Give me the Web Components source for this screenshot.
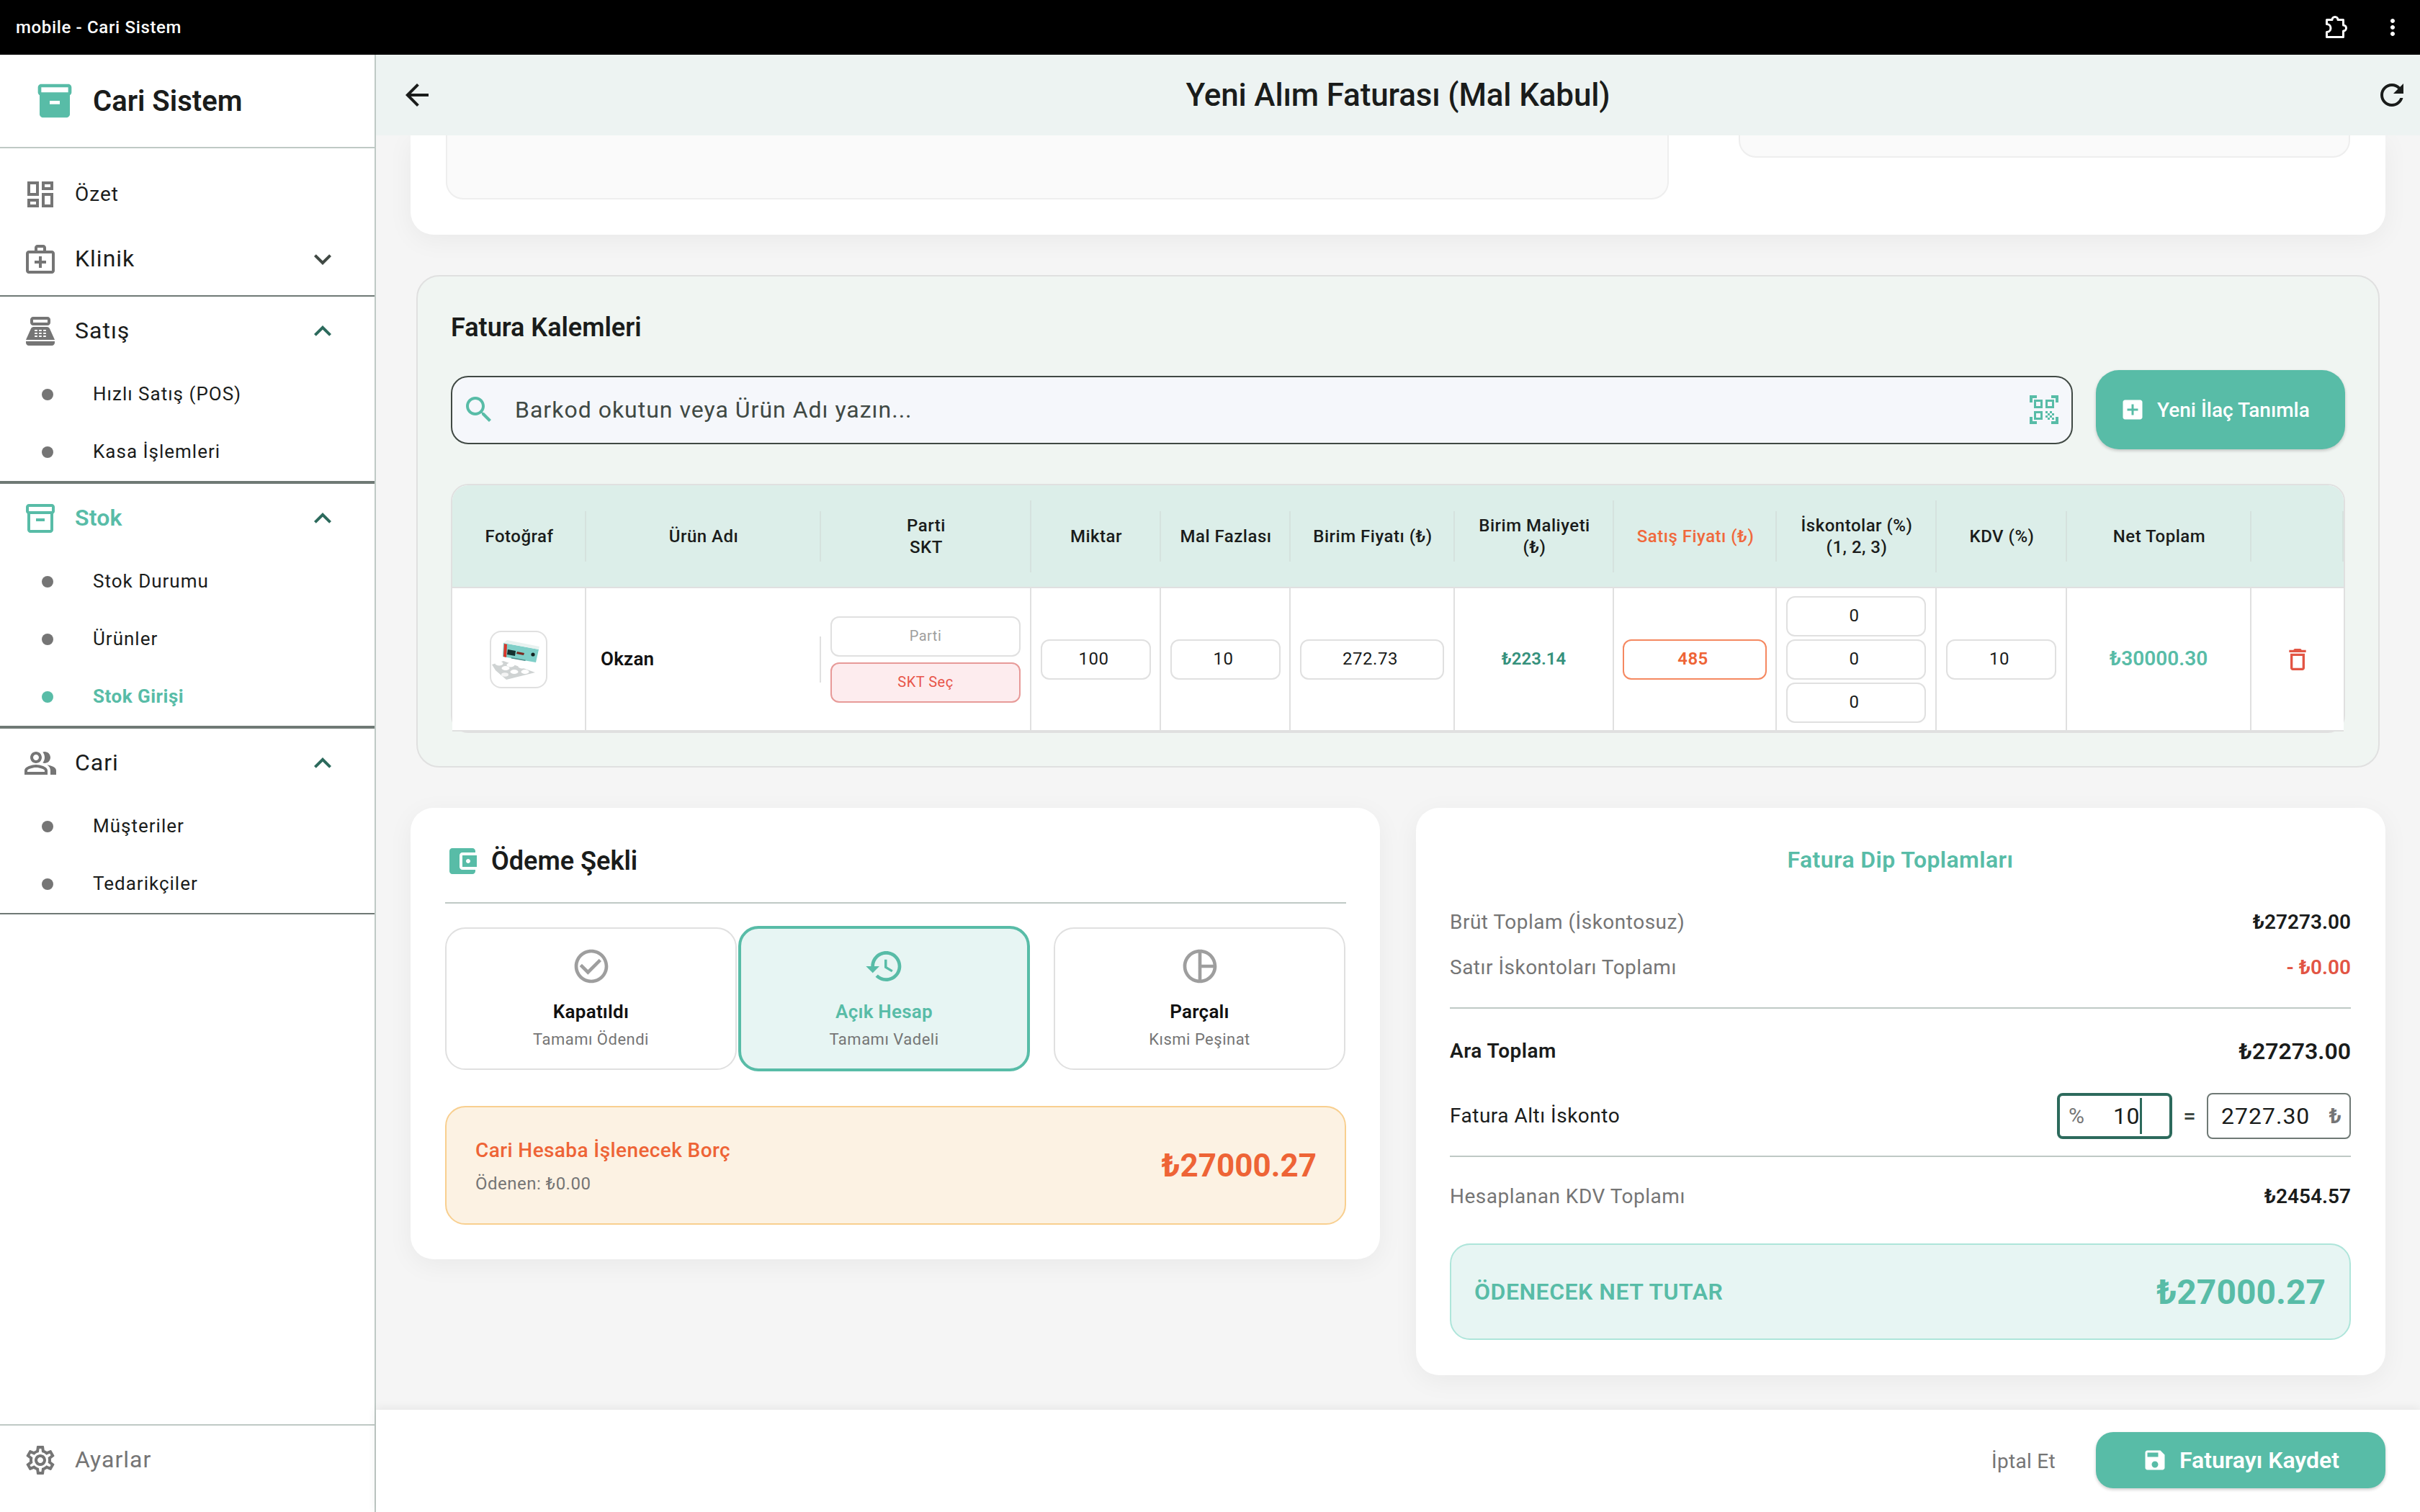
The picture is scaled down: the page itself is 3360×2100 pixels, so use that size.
<!DOCTYPE html>
<html lang="tr">
<head>
<meta charset="utf-8">
<title>mobile - Cari Sistem</title>
<style>
html,body{margin:0;padding:0;width:3360px;height:2100px;overflow:hidden;background:#f5f5f5;font-family:Roboto,"Liberation Sans",sans-serif;}
</style>
</head>
<body>
<app-shell></app-shell>
<script>
const ICONS={
inventory:"M20 2H4c-1 0-2 .9-2 2v3.01c0 .72.43 1.34 1 1.69V20c0 1.1 1.1 2 2 2h14c.9 0 2-.9 2-2V8.7c.57-.35 1-.97 1-1.69V4c0-1.1-1-2-2-2zm-5 12H9v-2h6v2zm5-7H4V4l16-.02V7z",
inventoryO:"M20 2H4c-1 0-2 .9-2 2v3.01c0 .72.43 1.34 1 1.69V20c0 1.1 1.1 2 2 2h14c.9 0 2-.9 2-2V8.7c.57-.35 1-.97 1-1.69V4c0-1.1-1-2-2-2zm-1 18H5V9h14v11zm1-13H4V4h16v3z M9 12h6v2H9z",
dashboard:"M19 5v2h-4V5h4M9 5v6H5V5h4m10 8v6h-4v-6h4M9 17v2H5v-2h4M21 3h-8v6h8V3zM11 3H3v10h8V3zm10 8h-8v10h8V11zm-10 4H3v6h8v-6z",
medical:"M20 6h-4V4c0-1.1-.9-2-2-2h-4c-1.1 0-2 .9-2 2v2H4c-1.1 0-2 .9-2 2v12c0 1.1.9 2 2 2h16c1.1 0 2-.9 2-2V8c0-1.1-.9-2-2-2zM10 4h4v2h-4V4zm10 16H4V8h16v12z M13 10h-2v3H8v2h3v3h2v-3h3v-2h-3z",
pos:"M17 2H7c-1.1 0-2 .9-2 2v2c0 1.1.9 2 2 2h10c1.1 0 2-.9 2-2V4c0-1.1-.9-2-2-2zm0 4H7V4h10v2zm3 16H4c-1.1 0-2-.9-2-2v-1h20v1c0 1.1-.9 2-2 2zm-1.47-11.81C18.21 9.47 17.49 9 16.7 9H7.3c-.79 0-1.51.47-1.83 1.19L2 18h20l-3.47-7.81zM9.5 16h-1c-.28 0-.5-.22-.5-.5s.22-.5.5-.5h1c.28 0 .5.22.5.5s-.22.5-.5.5zm0-2h-1c-.28 0-.5-.22-.5-.5s.22-.5.5-.5h1c.28 0 .5.22.5.5s-.22.5-.5.5zm0-2h-1c-.28 0-.5-.22-.5-.5s.22-.5.5-.5h1c.28 0 .5.22.5.5s-.22.5-.5.5zm3 4h-1c-.28 0-.5-.22-.5-.5s.22-.5.5-.5h1c.28 0 .5.22.5.5s-.22.5-.5.5zm0-2h-1c-.28 0-.5-.22-.5-.5s.22-.5.5-.5h1c.28 0 .5.22.5.5s-.22.5-.5.5zm0-2h-1c-.28 0-.5-.22-.5-.5s.22-.5.5-.5h1c.28 0 .5.22.5.5s-.22.5-.5.5zm3 4h-1c-.28 0-.5-.22-.5-.5s.22-.5.5-.5h1c.28 0 .5.22.5.5s-.22.5-.5.5zm0-2h-1c-.28 0-.5-.22-.5-.5s.22-.5.5-.5h1c.28 0 .5.22.5.5s-.22.5-.5.5zm0-2h-1c-.28 0-.5-.22-.5-.5s.22-.5.5-.5h1c.28 0 .5.22.5.5s-.22.5-.5.5z",
people:"M16.67 13.13C18.04 14.06 19 15.32 19 17v3h4v-3c0-2.18-3.57-3.47-6.33-3.87z M15 12c2.21 0 4-1.79 4-4s-1.79-4-4-4c-.47 0-.91.1-1.33.24C14.5 5.27 15 6.58 15 8s-.5 2.73-1.33 3.76c.42.14.86.24 1.33.24z M9 12c2.21 0 4-1.79 4-4s-1.79-4-4-4-4 1.79-4 4 1.79 4 4 4zm0-6c1.1 0 2 .9 2 2s-.9 2-2 2-2-.9-2-2 .9-2 2-2z M9 13c-2.67 0-8 1.34-8 4v3h16v-3c0-2.66-5.33-4-8-4zm6 5H3v-.99C3.2 16.29 6.3 15 9 15s5.8 1.29 6 2v1z",
settings:"M19.43 12.98c.04-.32.07-.64.07-.98 0-.34-.03-.66-.07-.98l2.11-1.65c.19-.15.24-.42.12-.64l-2-3.46c-.09-.16-.26-.25-.44-.25-.06 0-.12.01-.17.03l-2.49 1c-.52-.4-1.08-.73-1.69-.98l-.38-2.65C14.46 2.18 14.25 2 14 2h-4c-.25 0-.46.18-.49.42l-.38 2.65c-.61.25-1.17.59-1.69.98l-2.49-1c-.06-.02-.12-.03-.18-.03-.17 0-.34.09-.43.25l-2 3.46c-.13.22-.07.49.12.64l2.11 1.65c-.04.32-.07.65-.07.98 0 .33.03.66.07.98l-2.11 1.65c-.19.15-.24.42-.12.64l2 3.46c.09.16.26.25.44.25.06 0 .12-.01.17-.03l2.49-1c.52.4 1.08.73 1.69.98l.38 2.65c.03.24.24.42.49.42h4c.25 0 .46-.18.49-.42l.38-2.65c.61-.25 1.17-.59 1.69-.98l2.49 1c.06.02.12.03.18.03.17 0 .34-.09.43-.25l2-3.46c.12-.22.07-.49-.12-.64l-2.11-1.65zm-1.98-1.71c.04.31.05.52.05.73 0 .21-.02.43-.05.73l-.14 1.13.89.7 1.08.84-.7 1.21-1.27-.51-1.04-.42-.9.68c-.43.32-.84.56-1.25.73l-1.06.43-.16 1.13-.2 1.35h-1.4l-.19-1.35-.16-1.13-1.06-.43c-.43-.18-.83-.41-1.23-.71l-.91-.7-1.06.43-1.27.51-.7-1.21 1.08-.84.89-.7-.14-1.13c-.03-.31-.05-.54-.05-.74s.02-.43.05-.73l.14-1.13-.89-.7-1.08-.84.7-1.21 1.27.51 1.04.42.9-.68c.43-.32.84-.56 1.25-.73l1.06-.43.16-1.13.2-1.35h1.39l.19 1.35.16 1.13 1.06.43c.43.18.83.41 1.23.71l.91.7 1.06-.43 1.27-.51.7 1.21-1.07.85-.89.7.14 1.13zM12 8c-2.21 0-4 1.79-4 4s1.79 4 4 4 4-1.79 4-4-1.79-4-4-4zm0 6c-1.1 0-2-.9-2-2s.9-2 2-2 2 .9 2 2-.9 2-2 2z",
more:"M16.59 8.59L12 13.17 7.41 8.59 6 10l6 6 6-6z",
less:"M12 8l-6 6 1.41 1.41L12 10.83l4.59 4.58L18 14z",
back:"M20 11H7.83l5.59-5.59L12 4l-8 8 8 8 1.41-1.41L7.83 13H20v-2z",
refresh:"M17.65 6.35C16.2 4.9 14.21 4 12 4c-4.42 0-7.99 3.58-7.99 8s3.57 8 7.99 8c3.73 0 6.84-2.55 7.73-6h-2.08c-.82 2.33-3.04 4-5.65 4-3.31 0-6-2.69-6-6s2.69-6 6-6c1.66 0 3.14.69 4.22 1.78L13 11h7V4l-2.35 2.35z",
search:"M15.5 14h-.79l-.28-.27C15.41 12.59 16 11.11 16 9.5 16 5.91 13.09 3 9.5 3S3 5.91 3 9.5 5.91 16 9.5 16c1.61 0 3.09-.59 4.23-1.57l.27.28v.79l5 4.99L20.49 19l-4.99-5zm-6 0C7.01 14 5 11.99 5 9.5S7.01 5 9.5 5 14 7.01 14 9.5 11.99 14 9.5 14z",
qr:"M9.5 6.5v3h-3v-3h3M11 5H5v6h6V5zm-1.5 9.5v3h-3v-3h3M11 13H5v6h6v-6zm6.5-6.5v3h-3v-3h3M19 5h-6v6h6V5zm-6 8h1.5v1.5H13V13zm1.5 1.5H16V16h-1.5v-1.5zM16 13h1.5v1.5H16V13zm-3 3h1.5v1.5H13V16zm1.5 1.5H16V19h-1.5v-1.5zM16 16h1.5v1.5H16V16zm1.5-1.5H19V16h-1.5v-1.5zm0 3H19V19h-1.5v-1.5zM22 7h-2V4h-3V2h5v5zm0 15v-5h-2v3h-3v2h5zM2 22h5v-2H4v-3H2v5zM2 2v5h2V4h3V2H2z",
addbox:"M19 3H5c-1.11 0-2 .9-2 2v14c0 1.1.89 2 2 2h14c1.1 0 2-.9 2-2V5c0-1.1-.9-2-2-2zm-2 10h-4v4h-2v-4H7v-2h4V7h2v4h4v2z",
trash:"M6 19c0 1.1.9 2 2 2h8c1.1 0 2-.9 2-2V7H6v12zM8 9h8v10H8V9zm7.5-5l-1-1h-5l-1 1H5v2h14V4z",
wallet:"M21 18v1c0 1.1-.9 2-2 2H5c-1.11 0-2-.9-2-2V5c0-1.1.89-2 2-2h14c1.1 0 2 .9 2 2v1h-9c-1.11 0-2 .9-2 2v8c0 1.1.89 2 2 2h9zm-9-2h10V8H12v8zm4-2.5c-.83 0-1.5-.67-1.5-1.5s.67-1.5 1.5-1.5 1.5.67 1.5 1.5-.67 1.5-1.5 1.5z",
check:"M16.59 7.58L10 14.17l-3.59-3.58L5 12l5 5 8-8zM12 2C6.48 2 2 6.48 2 12s4.48 10 10 10 10-4.48 10-10S17.52 2 12 2zm0 18c-4.42 0-8-3.58-8-8s3.58-8 8-8 8 3.58 8 8-3.58 8-8 8z",
history:"M13 3c-4.97 0-9 4.03-9 9H1l3.89 3.89.07.14L9 12H6c0-3.87 3.13-7 7-7s7 3.13 7 7-3.13 7-7 7c-1.93 0-3.68-.79-4.94-2.06l-1.42 1.42C8.27 19.99 10.51 21 13 21c4.97 0 9-4.03 9-9s-4.03-9-9-9zm-1 5v5l4.28 2.54.72-1.21-3.5-2.08V8H12z",
pie:"M12 2C6.49 2 2 6.49 2 12s4.49 10 10 10 10-4.49 10-10S17.51 2 12 2zm1 2.07c3.61.45 6.48 3.33 6.93 6.93H13V4.07zM4 12c0-4.06 3.07-7.44 7-7.93v15.87c-3.93-.5-7-3.88-7-7.94zm9 7.93V13h6.93c-.45 3.61-3.32 6.48-6.93 6.93z",
save:"M17 3H5c-1.11 0-2 .9-2 2v14c0 1.1.89 2 2 2h14c1.1 0 2-.9 2-2V7l-4-4zm-5 16c-1.66 0-3-1.34-3-3s1.34-3 3-3 3 1.34 3 3-1.34 3-3 3zm3-10H5V5h10v4z",
kebab:"M12 8c1.1 0 2-.9 2-2s-.9-2-2-2-2 .9-2 2 .9 2 2 2zm0 2c-1.1 0-2 .9-2 2s.9 2 2 2 2-.9 2-2-.9-2-2-2zm0 6c-1.1 0-2 .9-2 2s.9 2 2 2 2-.9 2-2-.9-2-2-2z"
};
const TEAL="#58bca7",ORANGE="#ee6436",RED="#e25544",INK="#1a1c1b",GREY="#757575";

function comp(name,html,init){
  customElements.define(name,class extends HTMLElement{
    constructor(){super();this.attachShadow({mode:"open"});}
    connectedCallback(){
      if(this._r)return;this._r=1;
      this.shadowRoot.innerHTML=typeof html==="function"?html(this):html;
      if(init)init(this);
    }
  });
}
comp("ui-icon",h=>{
  const s=h.getAttribute("size")||48,c=h.getAttribute("color")||"currentColor",d=ICONS[h.getAttribute("name")];
  return `<style>:host{display:inline-flex;flex:none;width:${s}px;height:${s}px;color:${c}}svg{display:block;width:100%;height:100%;fill:currentColor}</style><svg viewBox="0 0 24 24"><path fill-rule="evenodd" d="${d}"/></svg>`;
});

comp("title-bar",`<style>
:host{display:flex;align-items:center;height:76px;background:#000;color:#fff;padding:0 20px 0 22px;font-size:24px;font-weight:500;letter-spacing:.65px;flex:none}
span{flex:1}.i{display:flex;align-items:center;gap:41px}
.x{display:block;width:40px;height:40px;fill:none;stroke:#fff;stroke-width:3;stroke-linejoin:round}
</style><span>mobile - Cari Sistem</span><div class="i"><svg class="x" viewBox="0 0 40 40"><path d="M7.5 9.5H15a4 4 0 0 1 8 0H30.5V17a4 4 0 0 1 0 8V33.5H7.5V26.5a5.5 5.5 0 0 0 0-11z"/></svg><ui-icon name="kebab" size="36" color="#fff"></ui-icon></div>`);

comp("nav-tile",h=>`<style>
:host{display:flex;align-items:center;height:${h.getAttribute("h")||80}px;padding-left:32px;color:${h.hasAttribute("muted")?GREY:INK};font-size:${h.getAttribute("fs")||28}px;letter-spacing:1px}
ui-icon{margin-right:24px}
span{padding-bottom:2px}
</style><ui-icon name="${h.getAttribute("icon")}" size="48" color="#757575"></ui-icon><span><slot></slot></span>`);

comp("nav-sub",h=>{const a=h.hasAttribute("active");return `<style>
:host{display:flex;align-items:center;height:80px;padding-left:58px;font-size:26px;letter-spacing:${a?.5:1}px;color:${a?TEAL:INK};font-weight:${a?700:400}}
i{width:16px;height:16px;border-radius:50%;background:${a?TEAL:"#757575"};margin-right:55px;flex:none}
span{padding-bottom:2px}
</style><i></i><span><slot></slot></span>`});

comp("nav-group",h=>{
  const open=h.hasAttribute("open"),act=h.hasAttribute("active");
  return `<style>
:host{display:block;border-top:2px solid ${open?"#6f7975":"transparent"};border-bottom:2px solid ${open?"#6f7975":"transparent"}}
.h{display:flex;align-items:center;height:96px;padding:0 48px 0 32px;font-size:32px;letter-spacing:${act?.2:1}px;color:${act?TEAL:INK};font-weight:${act?600:400}}
.h ui-icon:first-child{margin-right:24px}
span{flex:1;padding-bottom:2px}
</style><div class="h"><ui-icon name="${h.getAttribute("icon")}" size="48" color="${act?TEAL:"#757575"}"></ui-icon><span>${h.getAttribute("label")}</span><ui-icon name="${open?"less":"more"}" size="48" color="${open?"#2c6a5c":"#404944"}"></ui-icon></div><slot></slot>`;
});

comp("side-nav",`<style>
:host{display:flex;flex-direction:column;width:520px;flex:none;background:#fff;border-right:2px solid #bfc9c5;height:2024px}
.logo{display:flex;align-items:center;height:128px;border-bottom:2px solid #bfc9c5;padding-left:48px;font-size:40px;font-weight:600;color:${INK};flex:none}
.logo ui-icon{margin-right:25px}
nav{flex:1;padding-top:24px}
.foot{border-top:2px solid #bfc9c5;padding-bottom:24px;flex:none}
</style>
<div class="logo"><ui-icon name="inventory" size="56" color="${TEAL}"></ui-icon>Cari Sistem</div>
<nav>
<nav-tile icon="dashboard">Özet</nav-tile>
<nav-group icon="medical" label="Klinik"></nav-group>
<nav-group icon="pos" label="Satış" open><nav-sub>Hızlı Satış (POS)</nav-sub><nav-sub>Kasa İşlemleri</nav-sub></nav-group>
<nav-group icon="inventoryO" label="Stok" open active><nav-sub>Stok Durumu</nav-sub><nav-sub>Ürünler</nav-sub><nav-sub active>Stok Girişi</nav-sub></nav-group>
<nav-group icon="people" label="Cari" open><nav-sub>Müşteriler</nav-sub><nav-sub>Tedarikçiler</nav-sub></nav-group>
</nav>
<div class="foot"><nav-tile icon="settings" h="96" fs="32" muted>Ayarlar</nav-tile></div>`);

comp("app-header",`<style>
:host{display:grid;grid-template-columns:1fr auto 1fr;align-items:center;height:112px;background:#edf3f2;flex:none;color:${INK}}
h1{margin:0;font-size:44px;font-weight:500;line-height:56px;letter-spacing:-.15px}
.b{margin-left:33px}
.r{justify-self:end;margin-right:15px}
</style><ui-icon class="b" name="back" size="48"></ui-icon><h1>Yeni Alım Faturası (Mal Kabul)</h1><ui-icon class="r" name="refresh" size="48"></ui-icon>`);

comp("clipped-card",`<style>
:host{display:flex;height:138px;background:#fff;margin:0 48px;border-radius:0 0 32px 32px;box-shadow:0 8px 36px rgba(0,0,0,.05);padding:0 49px 0 49px;box-sizing:border-box;flex:none}
.a,.b{background:#fafafa;border:2px solid #eee;border-top:0;border-radius:0 0 24px 24px;box-sizing:border-box}
.a{width:1698px;height:89px}
.b{width:849px;height:31px;margin-left:97px}
</style><div class="a"></div><div class="b"></div>`);

comp("num-field",h=>{
  const w=h.getAttribute("w"),c=h.getAttribute("color")||INK,b=h.getAttribute("border")||"#e0e0e0",bg=h.getAttribute("bg")||"#fff",fs=h.getAttribute("fs")||24,fw=h.getAttribute("fw")||400,pr=h.getAttribute("pr")||5;
  return `<style>:host{display:flex;align-items:center;justify-content:center;width:${w}px;height:56px;box-sizing:border-box;border:2px solid ${b};border-radius:12px;background:${bg};color:${c};font-size:${fs}px;font-weight:${fw};letter-spacing:.5px;padding:0 ${pr}px 2px 0;flex:none}</style><slot></slot>`;
});

comp("items-table",`<style>
:host{display:block;border:2px solid #e0e0e0;border-radius:24px;background:#fff}
.g{display:grid;grid-template-columns:186px 326px 292px 180px 180px 228px 221px 226px 222px 181px 256px 128px}
.th{height:141px;background-color:#dceee9;border-bottom:2px solid #e0e0e0;display:flex;align-items:center;justify-content:center;text-align:center;font-size:24px;font-weight:500;line-height:30px;letter-spacing:.5px;color:${INK};background-image:linear-gradient(#d5e2de,#d5e2de);background-repeat:no-repeat;background-position:right center;background-size:2px 70px;box-sizing:content-box}
.th.t{background-size:2px 100px}
.th.f{border-top-left-radius:22px}.th.l{border-top-right-radius:22px;}
.th.o{color:#f0693c}
.td{height:197px;display:flex;flex-direction:column;align-items:center;justify-content:center;gap:4px;border-right:2px solid #e0e0e0;border-bottom:2px solid #e0e0e0;box-sizing:content-box;background:#fff}
.td.n{border-right:0;background-image:linear-gradient(#e0e0e0,#e0e0e0);background-repeat:no-repeat;background-position:right center;background-size:2px 64px;align-items:flex-start;padding:0 0 2px 20px;height:195px;font-size:26px;font-weight:600;letter-spacing:.2px;color:#111}
.td.e{border-right:0}
.td.p{gap:8px}
.pic{width:80px;height:80px;border:2px solid #e0e0e0;border-radius:16px;box-sizing:border-box;overflow:hidden;background:#fff}
.pic svg{display:block;width:76px;height:76px}
.txt{font-size:24px;font-weight:600;letter-spacing:0;padding-bottom:2px}
</style>
<div class="g">
<div class="th f">Fotoğraf</div><div class="th">Ürün Adı</div><div class="th t">Parti<br>SKT</div><div class="th">Miktar</div><div class="th">Mal Fazlası</div><div class="th">Birim Fiyatı (₺)</div><div class="th t">Birim Maliyeti<br>(₺)</div><div class="th o">Satış Fiyatı (₺)</div><div class="th t">İskontolar (%)<br>(1, 2, 3)</div><div class="th">KDV (%)</div><div class="th">Net Toplam</div><div class="th l"></div>
<div class="td"><div class="pic"><svg viewBox="0 0 76 76">
<polygon points="17,15 66,24 62,42 16,34" fill="#7fcfc8"/><polygon points="17,15 66,24 67,20 22,11" fill="#e8f2f0"/><polygon points="18,16 22,17 21,35 17,34" fill="#d8382c"/><polygon points="23,24 34,26 33,33 22,31" fill="#14312f"/><polygon points="36,27 46,29 45,32 35,30" fill="#7a2a20"/><circle cx="58" cy="31" r="2.6" fill="#14201f"/><rect x="28" y="35" width="20" height="1.6" fill="#4d8f8c" transform="rotate(10 28 35)"/>
<polygon points="1,45 17,40 61,56 21,66 6,53" fill="#cfd3d3"/>
<ellipse cx="11" cy="43.5" rx="5.5" ry="3" fill="#fff"/><ellipse cx="27" cy="45.5" rx="5.5" ry="3" fill="#fff"/><ellipse cx="43" cy="47.5" rx="5.5" ry="3" fill="#fff"/><ellipse cx="20" cy="50" rx="5.5" ry="3" fill="#fff"/><ellipse cx="32" cy="55" rx="5.5" ry="3" fill="#fff"/><ellipse cx="47" cy="55" rx="5.5" ry="3" fill="#fff"/><ellipse cx="19" cy="59" rx="5" ry="2.8" fill="#f4f4f4"/>
</svg></div></div>
<div class="td n">Okzan</div>
<div class="td p"><num-field w="264" color="#9e9e9e" fs="20" pr="0">Parti</num-field><num-field w="264" color="#e8554a" border="#e79a98" bg="#fdecee" fs="20" pr="0">SKT Seç</num-field></div>
<div class="td"><num-field w="153">100</num-field></div>
<div class="td"><num-field w="153">10</num-field></div>
<div class="td"><num-field w="200">272.73</num-field></div>
<div class="td"><span class="txt" style="color:#35917c">₺223.14</span></div>
<div class="td"><num-field w="200" color="${ORANGE}" border="#f58860" fw="600">485</num-field></div>
<div class="td"><num-field w="194">0</num-field><num-field w="194">0</num-field><num-field w="194">0</num-field></div>
<div class="td"><num-field w="153">10</num-field></div>
<div class="td"><span class="txt" style="font-size:28px;color:${TEAL}">₺30000.30</span></div>
<div class="td e"><ui-icon name="trash" size="40" color="${RED}"></ui-icon></div>
</div>`);

comp("items-panel",`<style>
:host{display:block;margin:56px 56px 0;background:#f0f5f2;border:2px solid #e0e0e0;border-radius:32px;padding:49px 46px 46px 46px;flex:none}
h2{margin:0;font-size:36px;font-weight:600;line-height:44px;color:${INK}}
.row{display:flex;align-items:center;gap:32px;margin:37px 0 48px}
.s{flex:1;display:flex;align-items:center;height:95px;box-sizing:border-box;background:#f5f7fb;border:2px solid #404944;border-radius:24px;padding:0 14px 0 13px;font-size:32px;letter-spacing:1px;color:#404944}
.s span{flex:1;margin-left:26px}
.btn{display:flex;align-items:center;height:110px;width:346px;flex:none;box-sizing:border-box;background:${TEAL};border-radius:32px;color:#fff;font-size:28px;font-weight:500;padding-left:33px;box-shadow:0 2px 4px rgba(0,0,0,.2)}
.btn ui-icon{margin-right:16px}
</style><h2>Fatura Kalemleri</h2>
<div class="row"><div class="s"><ui-icon name="search" color="${TEAL}"></ui-icon><span>Barkod okutun veya Ürün Adı yazın...</span><ui-icon name="qr" color="${TEAL}"></ui-icon></div>
<div class="btn"><ui-icon name="addbox" size="36" color="#fff"></ui-icon>Yeni İlaç Tanımla</div></div>
<items-table></items-table>`);

comp("pay-option",h=>{
  const sel=h.hasAttribute("selected");
  return `<style>
:host{display:flex;flex-direction:column;align-items:center;justify-content:center;box-sizing:border-box;flex:none;width:${h.getAttribute("w")}px;height:${sel?202:198}px;margin-left:${h.getAttribute("ml")||0}px;background:${sel?"#e7f5f3":"#fff"};border:${sel?4:2}px solid ${sel?TEAL:"#e0e0e0"};border-radius:28px;padding-bottom:2px}
b{font-size:26px;font-weight:600;line-height:30px;margin-top:20px;letter-spacing:.25px;color:${sel?TEAL:"#111"}}
small{font-size:22px;line-height:28px;margin-top:10px;color:${GREY};letter-spacing:.5px}
</style><ui-icon name="${h.getAttribute("icon")}" size="56" color="${sel?TEAL:"#9e9e9e"}"></ui-icon><b>${h.getAttribute("label")}</b><small>${h.getAttribute("sub")}</small>`;
});

comp("payment-card",`<style>
:host{display:block;width:1346px;box-sizing:border-box;flex:none;background:#fff;border-radius:32px;padding:50px 47px 48px 48px;box-shadow:0 8px 36px rgba(0,0,0,.05)}
.t{display:flex;align-items:center;gap:16px;font-size:36px;font-weight:600;height:48px;color:${INK};padding-bottom:33px;border-bottom:2px solid #bfc9c5;margin-bottom:31px}
.o{display:flex;align-items:center}
.d{display:flex;align-items:center;justify-content:space-between;box-sizing:border-box;height:165px;margin-top:48px;background:#fcf2e3;border:2px solid #f8cf8f;border-radius:28px;padding:0 39px 0 40px}
.d b{display:block;color:${ORANGE};font-size:28px;font-weight:500;line-height:34px;letter-spacing:.4px;padding-top:2px}
.d small{display:block;color:${GREY};font-size:24px;line-height:30px;margin-top:14px;letter-spacing:.5px}
.d strong{color:${ORANGE};font-size:44px;font-weight:700}
</style><div class="t"><ui-icon name="wallet" color="${TEAL}"></ui-icon>Ödeme Şekli</div>
<div class="o"><pay-option w="405" icon="check" label="Kapatıldı" sub="Tamamı Ödendi"></pay-option><pay-option w="405" ml="2" selected icon="history" label="Açık Hesap" sub="Tamamı Vadeli"></pay-option><pay-option w="405" ml="33" icon="pie" label="Parçalı" sub="Kısmi Peşinat"></pay-option></div>
<div class="d"><div><b>Cari Hesaba İşlenecek Borç</b><small>Ödenen: ₺0.00</small></div><strong>₺27000.27</strong></div>`);

comp("sum-row",h=>{
  const m=h.getAttribute("mt")||0;
  return `<style>:host{display:flex;justify-content:space-between;align-items:center;margin-top:${m}px;line-height:${h.getAttribute("lh")||36}px;font-size:28px;color:${h.getAttribute("lc")||GREY};font-weight:${h.getAttribute("lw")||400};letter-spacing:.5px}
::slotted(*){letter-spacing:0}</style><span><slot></slot></span><slot name="v"></slot>`;
});

comp("summary-card",`<style>
:host{display:block;width:1346px;box-sizing:border-box;flex:none;background:#fff;border-radius:32px;padding:52px 48px 49px 47px;box-shadow:0 8px 36px rgba(0,0,0,.05)}
h3{margin:0;text-align:center;color:${TEAL};font-size:32px;font-weight:600;line-height:40px;letter-spacing:.4px}
.v{font-size:28px;font-weight:600;color:${INK}}
hr{border:0;height:2px;background:#bfc9c5;margin:0}
.f{display:flex;align-items:center;height:64px}
.pi,.ai{display:flex;align-items:center;box-sizing:border-box;height:64px;border-radius:8px;font-size:32px;color:${INK}}
.pi{width:160px;border:4px solid #2c6a5c;padding:0 0 0 12px}
.pi em{font-style:normal;font-size:30px;color:${GREY};margin-right:40px}
.pi u{text-decoration:none;border-right:3px solid #2c6a5c;height:50px;line-height:50px;letter-spacing:.5px}
.eq{width:48px;text-align:center;font-size:30px;font-weight:600;color:#404944}
.ai{width:200px;border:2px solid #6f7975;padding:0 10px 0 18px;justify-content:space-between;letter-spacing:1px}
.ai em{font-style:normal;font-size:30px;font-weight:600;color:${GREY}}
.net{display:flex;align-items:center;justify-content:space-between;box-sizing:border-box;height:134px;margin-top:47px;background:#e7f5f3;border:2px solid #aee5da;border-radius:28px;padding:0 33px 0 32px;color:${TEAL}}
.net b{font-size:32px;font-weight:600;letter-spacing:.5px}
.net strong{font-size:48px;font-weight:700}
</style><h3>Fatura Dip Toplamları</h3>
<sum-row mt="49">Brüt Toplam (İskontosuz)<span slot="v" class="v">₺27273.00</span></sum-row>
<sum-row mt="27">Satır İskontoları Toplamı<span slot="v" class="v" style="color:${RED}">- ₺0.00</span></sum-row>
<hr style="margin-top:37px">
<sum-row mt="39" lh="40" lw="600" lc="${INK}">Ara Toplam<span slot="v" class="v" style="font-size:32px">₺27273.00</span></sum-row>
<sum-row mt="38" lh="64" lc="${INK}">Fatura Altı İskonto<div slot="v" class="f"><div class="pi"><em>%</em><u>10</u></div><div class="eq">=</div><div class="ai"><span>2727.30</span><em>₺</em></div></div></sum-row>
<hr style="margin-top:23px">
<sum-row mt="37">Hesaplanan KDV Toplamı<span slot="v" class="v">₺2454.57</span></sum-row>
<div class="net"><b>ÖDENECEK NET TUTAR</b><strong>₺27000.27</strong></div>`);

comp("bottom-bar",`<style>
:host{display:flex;align-items:center;justify-content:flex-end;height:142px;background:#fff;padding:0 48px 0 0;flex:none;box-shadow:0 -2px 12px rgba(0,0,0,.07);position:relative;z-index:2}
.c{font-size:28px;letter-spacing:.3px;color:${GREY};margin-right:56px}
.s{display:flex;align-items:center;justify-content:center;width:402px;height:78px;background:${TEAL};border-radius:24px;color:#fff;font-size:32px;font-weight:600;box-shadow:0 2px 4px rgba(0,0,0,.2);gap:16px;margin-top:-2px}
</style><span class="c">İptal Et</span><div class="s"><ui-icon name="save" size="36" color="#fff"></ui-icon>Faturayı Kaydet</div>`);

comp("main-pane",`<style>
:host{display:flex;flex-direction:column;flex:1;min-width:0;height:2024px;background:#f5f5f5}
.c{flex:1;min-height:0;overflow:hidden;display:flex;flex-direction:column}
.two{display:flex;align-items:flex-start;gap:50px;margin:56px 48px 0}
</style><app-header></app-header>
<div class="c"><clipped-card></clipped-card><items-panel></items-panel><div class="two"><payment-card></payment-card><summary-card></summary-card></div></div>
<bottom-bar></bottom-bar>`);

comp("app-shell",`<style>
:host{display:flex;flex-direction:column;width:3360px;height:2100px;font-family:Roboto,"Liberation Sans",sans-serif;overflow:hidden}
.b{display:flex;flex:1;min-height:0}
</style><title-bar></title-bar><div class="b"><side-nav></side-nav><main-pane></main-pane></div>`);
</script>
</body>
</html>
